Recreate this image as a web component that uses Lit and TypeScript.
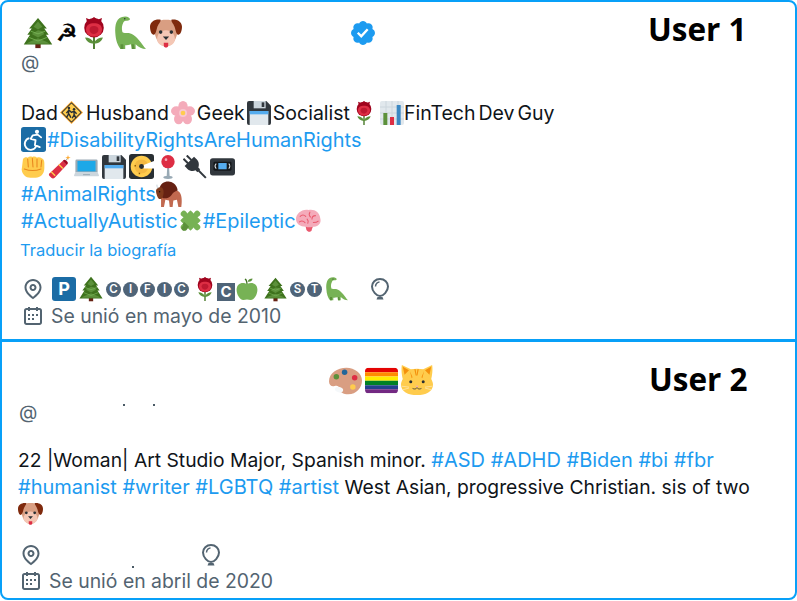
import { LitElement, html, css, svg, TemplateResult } from "lit";
import { customElement } from "lit/decorators.js";

const E: Record<string, any> = {
  tree: svg`<path fill="#662113" d="M15 29h6v6h-6z"/><path fill="#3E721D" d="M18 1 8 13h3L6 20h3L2 31h32L27 20h3l-5-7h3z"/><path fill="#5C913B" d="M18 5l-5 6 5 3 5-3zM18 15l-7 4 7 4 7-4-2-3zM18 24l-10 4 -3 2h26l-3-2z"/><path fill="none" stroke="#77B255" stroke-width="1" d="M10 16l8 3 8-3M8 23l10 4 10-4"/>`,
  rose: svg`<path fill="#3E721D" d="M17 18h2v18h-2z"/><path fill="#5C913B" d="M18 29c-2-4-6-6-10-6 1 4 5 7 10 7zM18 29c2-4 6-6 10-6-1 4-5 7-10 7z"/><circle cx="18" cy="12" r="11" fill="#A0041E"/><path fill="#A0041E" d="M10 5l-1-4 5 2 4-3 4 3 5-2-1 4z"/><path fill="#DD2E44" d="M18 7c5 0 9 2 9 7s-4 8-9 8-9-3-9-8 4-7 9-7z"/><path fill="#BE1931" d="M18 10c3 0 5 1.500 5 4s-2 5-5 5-5-2-5-5 2-4 5-4z"/>`,
  dino: svg`<path fill="#77B255" d="M14 .5c3 0 5 1.500 5 3 0 1-1.500 1.500-3 1.500-2 0-3 0-4 2-1.500 3-2 6-1 10 1 2 6 0 10 2 6 3 10 10 15 16-4 0-8-2-11-5v5h-4l-1-5c-2 1-4 1-6 1v4H9C6 31 4 26 3.500 18 3 10 4 .5 14 .5z"/><circle cx="13.500" cy="3" r=".8" fill="#292F33"/><path fill="#5C913B" d="M9 30h3l0 5H9zM21 30h2l1 5h-3z"/>`,
  dog: svg`<path fill="#D99E82" d="M31 14c0 9-5 19-13 19S5 23 5 14 10 3 18 3s13 2 13 11z"/><path fill="#F4C7B5" d="M18 15c6 0 10 5 10 10s-5 8-10 8-10-3-10-8 4-10 10-10z"/><path fill="#7F2A0D" d="M12 3C6 2 0 5 0 11c0 5 2 9 4 9s3-4 4-8 4-6 4-9zM24 3c6-1 12 2 12 8 0 5-2 9-4 9s-3-4-4-8-4-6-4-9z"/><circle cx="12" cy="17" r="2" fill="#292F33"/><circle cx="24" cy="17" r="2" fill="#292F33"/><path fill="#292F33" d="M14.500 22h7l-3.500 4z"/><path fill="#DD2E44" d="M15.500 29h5v3c0 3-5 3-5 0z"/>`,
  sign: svg`<path fill="#FFAC33" d="M18 0 36 18 18 36 0 18z"/><path fill="#292F33" d="M18 2 34 18 18 34 2 18z"/><path fill="#FFCC4D" d="M18 4 32 18 18 32 4 18z"/><circle cx="14" cy="11" r="2" fill="#292F33"/><circle cx="22" cy="13" r="2" fill="#292F33"/><path fill="none" stroke="#292F33" stroke-width="2.200" d="M14 14l-1 7-3 5M14 20l3 6M22 16l0 6-3 5M22 21l3 6M10 19l4-5 4 4 4-2 4 4"/>`,
  blossom: svg`<g fill="#F4ABBA"><ellipse cx="18" cy="8" rx="7" ry="8"/><ellipse cx="8" cy="15" rx="8" ry="7"/><ellipse cx="28" cy="15" rx="8" ry="7"/><ellipse cx="11.500" cy="27" rx="7" ry="8"/><ellipse cx="24.500" cy="27" rx="7" ry="8"/></g><circle cx="18" cy="18" r="6" fill="#F8C7D0"/><circle cx="18" cy="18" r="3.500" fill="#FFCC4D"/>`,
  floppy: svg`<path fill="#31373D" d="M3 0h26l7 7v26a3 3 0 0 1-3 3H3a3 3 0 0 1-3-3V3a3 3 0 0 1 3-3z"/><path fill="#CCD6DD" d="M10 0h18v11H10z"/><path fill="#31373D" d="M22 2h4v7h-4z"/><path fill="#E1E8ED" d="M4 15h28v21H4z"/><path fill="#55ACEE" d="M4 15h28v5H4z"/>`,
  chart: svg`<rect width="36" height="36" rx="3" fill="#E1E8ED"/><path stroke="#CCD6DD" stroke-width="1.500" d="M0 9h36M0 18h36M0 27h36M9 0v36M18 0v36M27 0v36"/><path fill="#5C913B" d="M5 18h6v18H5z"/><path fill="#DD2E44" d="M15 24h6v12h-6z"/><path fill="#3B88C3" d="M25 6h6v30h-6z"/>`,
  wheel: svg`<rect width="36" height="36" rx="4" fill="#1B6CA5"/><circle cx="23" cy="7" r="3" fill="#fff"/><path fill="none" stroke="#fff" stroke-width="2.600" stroke-linecap="round" stroke-linejoin="round" d="M29 15l-5-4-7 1-3 5 7 2-1 7 7 3"/><path fill="none" stroke="#fff" stroke-width="2.600" d="M12 16a8.500 8.500 0 1 0 10 11"/>`,
  fist: svg`<path fill="#FFCC4D" d="M3 6c2-3 5-3 7-2 2-2 5-2 7-1 2-1 5-1 7 1 2-1 5-1 7 1 3 1 4 4 4 7v8c0 9-6 14-13 14H14C7 34 2 29 1 22z"/><path fill="none" stroke="#E8871E" stroke-width="1.600" stroke-linecap="round" d="M10 6l1 12M17 5l1 13M24 6l0 12M31 8l-1 10M5 21c8 3 17 3 25 0"/>`,
  tnt: svg`<path fill="#DD2E44" d="M3 27 22 9l6 6-18 19c-2 2-4 1-5 0l-3-3c-1-1-1-3 1-4z"/><path fill="#FFCC4D" d="M5.500 24.500l6 6-1.500 1.500-6-6zM17 13.500l6 6-1.500 1.500-6-6z"/><path fill="#A0041E" d="M22 9l6 6 1-1c1-1 1-3 0-4l-2-2c-1-1-3-1-4 0z"/><path fill="none" stroke="#99AAB5" stroke-width="1.500" d="M27 8l3-4"/><path fill="#FFAC33" d="M30 0l1 3 3 1-3 1-1 3-1-3-3-1 3-1z"/>`,
  laptop: svg`<path fill="#99AAB5" d="M4 8h28a2 2 0 0 1 2 2v16H2V10a2 2 0 0 1 2-2z"/><path fill="#1CA8E8" d="M5 10h26v15H5z"/><path fill="#CCD6DD" d="M2 26h32l2 5a1 1 0 0 1-1 1H1a1 1 0 0 1-1-1z"/><path fill="#99AAB5" d="M13 29h10v1.500H13z"/>`,
  dvd: svg`<rect width="36" height="36" rx="4" fill="#292F33"/><circle cx="18" cy="18" r="15.500" fill="#FFCC4D"/><circle cx="18" cy="18" r="10" fill="#F4B942"/><path fill="#fff" d="M21 16l15-6v11l-15 0z"/><circle cx="18" cy="18" r="3.500" fill="#292F33"/><path fill="#8A5C0A" d="M8 16h2v2H8zM14 27h2v2h-2z"/>`,
  pin: svg`<path fill="#99AAB5" d="M17 16h2.500l1 17h-4.500z"/><ellipse cx="18" cy="33.500" rx="7" ry="2.500" fill="#99AAB5"/><circle cx="18" cy="10" r="10" fill="#DD2E44"/><circle cx="15" cy="7" r="2" fill="#F4ABBA"/>`,
  plug: svg`<g transform="rotate(-45 18 18)"><path fill="#31373D" d="M13-3h3v10h-3zM20-3h3v10h-3z"/><path fill="#31373D" d="M8 6h20v6c0 5-4 9-7 10v4h-6v-4c-3-1-7-5-7-10z"/><path fill="#31373D" d="M16.500 25h3v16h-3z"/></g>`,
  vhs: svg`<rect y="6" width="36" height="25" rx="4" fill="#31373D"/><rect x="5" y="11" width="26" height="13" rx="2" fill="#14171A"/><rect x="12" y="13" width="12" height="9" fill="#55ACEE"/><path fill="none" stroke="#E1E8ED" stroke-width="1.500" d="M9 14c-2 2-2 5 0 7M27 14c2 2 2 5 0 7"/>`,
  bison: svg`<path fill="#C1694F" d="M12 14c8-4 20-2 22 4 2 4 2 12 1 18h-4l-2-10-5 1-1 9h-4l-1-9-5-1-2 10H7l0-14z"/><path fill="#662113" d="M5 10C6 4 12 0 19 1c6 1 10 5 11 12-4 1-7 3-9 7-2 3-6 4-9 4-5 0-8-7-7-14z"/><path fill="#7F3A1C" d="M0 13c1-4 5-5 8-4 3 2 3 8 2 11-1 4-3 5-5 5S0 18 0 13z"/><path fill="none" stroke="#CCD6DD" stroke-width="1.500" d="M3 10C1.500 9 1 7 1.500 5"/><circle cx="5" cy="15" r="1" fill="#111"/>`,
  puzzle: svg`<g transform="rotate(45 18 18)"><g fill="#77B255"><rect x="7.500" y="7.500" width="21" height="21" rx="1"/><circle cx="18" cy="4.500" r="4.500"/><circle cx="18" cy="31.500" r="4.500"/><circle cx="4.500" cy="18" r="4.500"/><circle cx="31.500" cy="18" r="4.500"/><path d="M15.500 6h5v3h-5zM15.500 27h5v3h-5zM6 15.500h3v5H6zM27 15.500h3v5h-3z"/></g></g><path fill="#5C913B" d="M9 20l7 7-4 5c-3 2-7 0-7-3 0-2 2-3 3-3-2-2-1-4 1-6z"/>`,
  brain: svg`<path fill="#F4ABBA" d="M18 3c8-2 16 3 17 12 2 8-4 12-11 12l-2 6c-3 2-6 1-7-2l-1-4C6 27 0 23 0 16 0 8 9 1 18 3z"/><path fill="#EA596E" d="M14 27c3 1 7 1 10 0l-2 6c-3 2-6 1-7-2z"/><path fill="none" stroke="#EA596E" stroke-width="1.500" stroke-linecap="round" d="M6 12c3-3 6-2 8 0M20 6c-2 3-1 5 1 7M28 11c-3 0-5 2-5 5M5 20c3-2 6-1 8 1M16 16c2 2 2 4 1 6M25 21c2 0 5 0 7-2"/>`,
  apple: svg`<path fill="#77B255" d="M18 10c4-2 10-3 14 1 5 5 3 14 0 19-2 4-5 6-8 6-2 0-4-1-6-1s-4 1-6 1c-3 0-6-2-8-6C1 25-1 16 4 11c4-4 10-3 14-1z"/><path fill="#3E721D" d="M17 10c0-3-1-6-3-8l2-1c2 2 3 6 3 9z"/><path fill="#5C913B" d="M19 6c1-3 4-5 8-5 0 3-3 6-8 5z"/>`,
  palette: svg`<path fill="#D99E82" d="M19 4C9 4 0 10 0 19c0 4 3 6 6 5 3-1 5 0 5 3 0 4 5 6 10 6 9 0 15-7 15-15S28 4 19 4z"/><ellipse cx="11" cy="28" rx="4.500" ry="3" fill="#F5F8FA" transform="rotate(15 11 28)"/><circle cx="8" cy="14" r="3" fill="#5C913B"/><circle cx="17" cy="9" r="3" fill="#226699"/><circle cx="28" cy="15" r="3" fill="#DD2E44"/><circle cx="26" cy="25" r="3" fill="#FFCC4D"/>`,
  rainbow: svg`<clipPath id="rb"><rect y="4" width="36" height="28" rx="4"/></clipPath><g clip-path="url(#rb)"><path fill="#E40303" d="M0 4h36v5H0z"/><path fill="#FF8C00" d="M0 9h36v4.700H0z"/><path fill="#FFED00" d="M0 13.700h36v4.700H0z"/><path fill="#008026" d="M0 18.400h36v4.700H0z"/><path fill="#24408E" d="M0 23.100h36v4.500H0z"/><path fill="#732982" d="M0 27.600h36V32H0z"/></g>`,
  cat: svg`<path fill="#FFCC4D" d="M1 1l10 5c4-1 10-1 14 0L35 1c1 5 0 12-1 16 1 2 2 4 2 6 0 8-8 12-18 12S0 31 0 23c0-2 1-4 2-6C1 13 0 6 1 1z"/><path fill="#F4900C" d="M2 3l7 4-5 5zM34 3l-7 4 5 5zM15 6h1.500l1 7h-1zM20 6h-1.500l-1 7h1zM10 8l3 7-1 1zM26 8l-3 7 1 1z"/><circle cx="11" cy="20" r="1.700" fill="#292F33"/><circle cx="25" cy="20" r="1.700" fill="#292F33"/><path fill="#F4ABBA" d="M16 24.500h4l-2 2z"/><path fill="none" stroke="#292F33" stroke-width=".8" d="M18 26.500c-1 2-3 2-5 1M18 26.500c1 2 3 2 5 1"/><path fill="none" stroke="#FFE8B6" stroke-width=".8" d="M1 25l8 1M2 29l7-2M35 25l-8 1M34 29l-7-2"/>`,
};

const VERIFIED = "M22.25 12c0-1.43-.88-2.67-2.19-3.34.46-1.39.2-2.9-.81-3.91s-2.52-1.27-3.91-.81c-.66-1.31-1.91-2.19-3.34-2.19s-2.67.88-3.33 2.19c-1.4-.46-2.91-.2-3.92.81s-1.26 2.52-.8 3.91c-1.31.67-2.2 1.91-2.2 3.34s.89 2.67 2.2 3.34c-.46 1.39-.21 2.9.8 3.91s2.52 1.26 3.91.81c.67 1.31 1.91 2.19 3.34 2.19s2.68-.88 3.34-2.19c1.39.45 2.9.2 3.91-.81s1.27-2.52.81-3.91c1.31-.67 2.19-1.91 2.19-3.34zm-11.71 4.2L6.8 12.46l1.41-1.42 2.26 2.26 4.8-5.23 1.47 1.36-6.2 6.77z";
const LOC = "M12 7c-1.93 0-3.5 1.57-3.5 3.5S10.07 14 12 14s3.5-1.57 3.5-3.5S13.93 7 12 7zm0 5c-.827 0-1.5-.673-1.5-1.5S11.173 9 12 9s1.5.673 1.5 1.5S12.827 12 12 12zm0-10c-4.687 0-8.5 3.813-8.5 8.5 0 5.967 7.621 11.116 7.945 11.332l.555.37.555-.37c.324-.216 7.945-5.365 7.945-11.332C20.5 5.813 16.687 2 12 2zm0 17.77c-1.665-1.241-6.5-5.196-6.5-9.27C5.5 6.916 8.416 4 12 4s6.5 2.916 6.5 6.5c0 4.073-4.835 8.028-6.5 9.27z";
const CAL = "M7 4V3h2v1h6V3h2v1h1.500C19.890 4 21 5.120 21 6.500v12c0 1.380-1.110 2.500-2.500 2.500h-13C4.120 21 3 19.880 3 18.500v-12C3 5.120 4.120 4 5.500 4H7zm0 2H5.500c-.27 0-.5.22-.5.5v12c0 .28.23.5.5.5h13c.28 0 .5-.22.5-.5v-12c0-.28-.22-.5-.5-.5H17v1h-2V6H9v1H7V6zm0 6h2v-2H7v2zm0 4h2v-2H7v2zm4-4h2v-2h-2v2zm0 4h2v-2h-2v2zm4-4h2v-2h-2v2z";

function em(name: string, size = 24): TemplateResult {
  return html`<svg class="em" width=${size} height=${size} viewBox="0 0 36 36" aria-hidden="true">${E[name]}</svg>`;
}
const ic = (d: string, size = 24) =>
  html`<svg class="ic" width=${size} height=${size} viewBox="0 0 24 24" aria-hidden="true"><path fill="#536471" d=${d}/></svg>`;
const balloon = () =>
  html`<svg class="ic" width="24" height="24" viewBox="0 0 24 24" aria-hidden="true"><path fill="none" stroke="#536471" stroke-width="2" d="M12 2c4.600 0 8 3.400 8 7.500 0 4.800-4.800 9.500-8 9.500s-8-4.700-8-9.500C4 5.400 7.400 2 12 2z"/><path fill="none" stroke="#536471" stroke-width="1.500" d="M7.500 9.500c0-2.500 2-4.500 4-4.500"/><path fill="#536471" d="M9.500 20h5l1 2.500h-7z"/></svg>`;
const circ = (c: string) => html`<span class="circ">${c}</span>`;

@customElement("app-root")
export class AppRoot extends LitElement {
  static styles = css`
    :host { display: block; position: relative; width: 797px; height: 601px; box-sizing: border-box; font-family: Inter, "Noto Sans", sans-serif; color: #0f1419; background: #fff; overflow: hidden; }
    * { box-sizing: border-box; }
    .card { border: 2px solid #08a0f8; }
    .u1 { height: 341px; border-radius: 8px 8px 0 0; padding: 14px 0 0 19px; }
    .u2 { height: 260px; margin-top: -1px; border-radius: 0 0 8px 8px; padding: 0 0 0 17px; }
    .em, .ic { flex: none; display: block; }
    .head { display: flex; align-items: center; height: 34px; }
    .head1 { gap: 2px; padding-left: 1px; }
    .ham { font-family: "DejaVu Sans", sans-serif; font-size: 24px; font-weight: 700; line-height: 32px; width: 20px; text-align: center; color: #000; -webkit-text-stroke: 0.6px #000; }
    .dogbox { margin-left: 2px; }
    .badge { margin-left: 165px; }
    .label { font-family: "Open Sans", sans-serif; font-weight: 700; color: #000; font-size: 31.500px; line-height: 34px; white-space: nowrap; }
    .head1 .label { margin-left: 269px; margin-top: -8px; }
    .head2 { gap: 3px; height: 34px; margin-top: 21px; padding-left: 310px; }
    .head2 .label { margin-left: 213px; margin-top: -2px; }
    .at { color: #536471; font-size: 19px; line-height: 20px; }
    .u1 .at { margin-top: 3px; }
    .u2 .at { margin-top: 6px; }
    .bio { margin-top: 26px; font-size: 19.500px; }
    .line { display: flex; align-items: center; height: 27px; white-space: pre; }
    .blue { color: #1d9bf0; }
    .bio .blue { font-size: 19.900px; }
    .l1 { gap: 2px; }
    .mh { margin-left: 1px; }
    .mc { margin-left: 2px; }
    .tight { word-spacing: -2.500px; margin-left: -2px; }
    .ws { margin-left: 1px; }
    .g3 { gap: 2.700px; }
    .tr { color: #1d9bf0; font-size: 16.500px; line-height: 20px; margin: 6px 0 0 -1px; }
    .meta { display: flex; align-items: center; height: 24px; color: #536471; font-size: 19.400px; white-space: pre; }
    .m1 { margin-top: 17px; }
    .m2 { margin-top: 3px; }
    .txt { margin-left: 6px; }
    .group { display: flex; gap: 2px; flex: none; }
    .circ { flex: none; width: 15px; height: 15px; border-radius: 50%; background: #4f6478; color: #fff; font-size: 11.500px; font-weight: 600; text-align: center; line-height: 15px; }
    .psq, .csq { flex: none; color: #fff; font-weight: 700; text-align: center; }
    .psq { width: 24px; height: 24px; border-radius: 3px; background: #1b6ca5; font-size: 18px; line-height: 24px; margin: 0 2px 0 7px; }
    .csq { width: 18px; height: 18px; margin-top: 5px; background: #4f6478; font-size: 15px; line-height: 18px; }
    .tree1 { margin-right: 2px; }
    .rose1 { margin-left: 4px; }
    .apple1 { margin-left: 1px; }
    .tree2 { margin: 0 2px 0 5px; }
    .dino1 { margin-left: 2px; }
    .ball1 { margin-left: 20px; }
    .bio2 { margin-top: 23px; margin-left: -1px; font-size: 19.300px; }
    .bio2 .blue { font-size: 20px; }
    .m3 { margin-top: 16px; }
    .ball2 { margin-left: 156px; }
    .m4 { margin-top: 2px; }
    .speck { position: absolute; width: 2px; height: 2px; background: #4a5a66; }
    .s1 { left: 123px; top: 404px; }
    .s2 { left: 153px; top: 404px; }
    .s3 { left: 132px; top: 566px; }
  `;

  render() {
    return html`
      <section class="card u1">
        <div class="head head1">
          ${em("tree", 32)}<span class="ham">☭</span>${em("rose", 32)}${em("dino", 34)}<span class="dogbox">${em("dog", 32)}</span>
          <span class="badge"><svg class="ic" width="28" height="28" viewBox="0 0 24 24" aria-hidden="true"><path fill="#1d9bf0" d=${VERIFIED}/></svg></span>
          <span class="label">User 1</span>
        </div>
        <div class="at">@</div>
        <div class="bio">
          <div class="line l1"><span>Dad</span>${em("sign", 23)}<span class="mh">Husband</span>${em("blossom", 24)}<span>Geek</span>${em("floppy", 24)}<span>Socialist</span>${em("rose", 24)}<span class="mc">${em("chart", 24)}</span><span class="tight">FinTech Dev Guy</span></div>
          <div class="line">${em("wheel", 25)}<span class="blue ws">#DisabilityRightsAreHumanRights</span></div>
          <div class="line g3">${em("fist", 24)}${em("tnt", 24)}${em("laptop", 25)}${em("floppy", 24)}${em("dvd", 25)}${em("pin", 24)}${em("plug", 24)}${em("vhs", 25)}</div>
          <div class="line"><span class="blue">#AnimalRights</span>${em("bison", 26)}</div>
          <div class="line"><span class="blue">#ActuallyAutistic</span>${em("puzzle", 25)}<span class="blue">#Epileptic</span>${em("brain", 25)}</div>
        </div>
        <div class="tr">Traducir la biografía</div>
        <div class="meta m1">
          ${ic(LOC)}<span class="psq">P</span><span class="tree1">${em("tree", 26)}</span>
          <span class="group">${circ("C")}${circ("I")}${circ("F")}${circ("I")}${circ("C")}</span>
          <span class="rose1">${em("rose", 24)}</span><span class="csq">C</span><span class="apple1">${em("apple", 22)}</span><span class="tree2">${em("tree", 25)}</span>
          <span class="group">${circ("S")}${circ("T")}</span><span class="dino1">${em("dino", 24)}</span>
          <span class="ball1">${balloon()}</span>
        </div>
        <div class="meta m2">${ic(CAL)}<span class="txt">Se unió en mayo de 2010</span></div>
      </section>
      <section class="card u2">
        <div class="head head2">${em("palette", 33)}${em("rainbow", 33)}${em("cat", 32)}<span class="label">User 2</span></div>
        <div class="at">@</div>
        <div class="bio2">
          <div class="line">22 |Woman| Art Studio Major, Spanish minor. <span class="blue">#ASD #ADHD #Biden #bi #fbr</span></div>
          <div class="line"><span class="blue">#humanist #writer #LGBTQ #artist</span> West Asian, progressive Christian. sis of two</div>
          <div class="line">${em("dog", 25)}</div>
        </div>
        <div class="meta m3">${ic(LOC)}<span class="ball2">${balloon()}</span></div>
        <div class="meta m4">${ic(CAL)}<span class="txt">Se unió en abril de 2020</span></div>
      </section>
      <i class="speck s1"></i><i class="speck s2"></i><i class="speck s3"></i>
    `;
  }
}
